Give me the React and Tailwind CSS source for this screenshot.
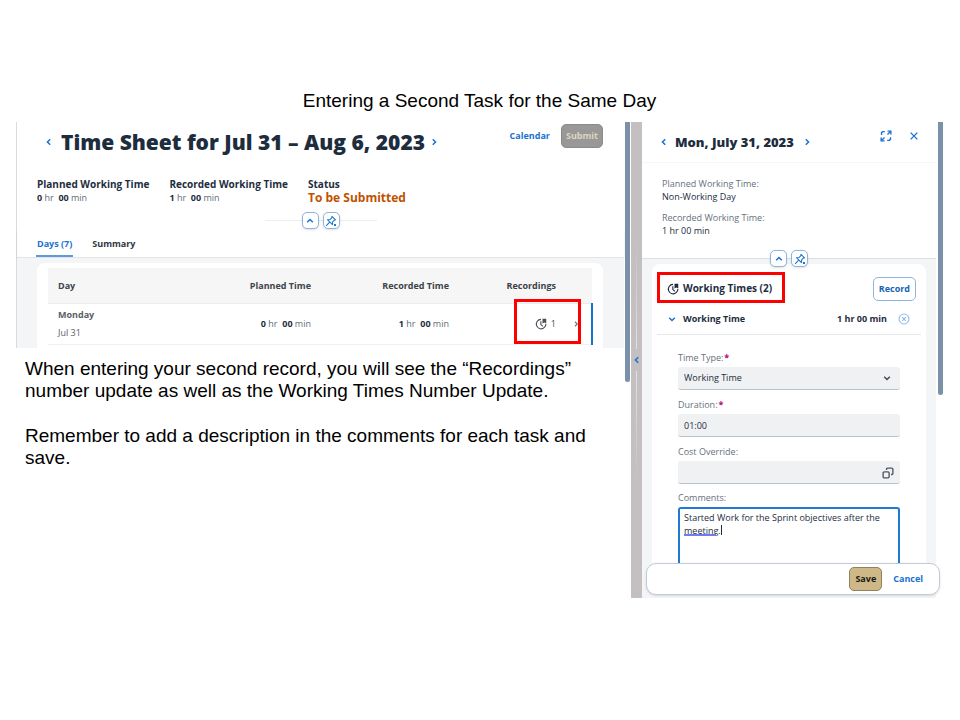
import { useState } from "react";

const days = [
	{ day: "Monday", date: "Jul 31", planned: ["0", "00"], recorded: ["1", "00"], count: 1 },
];

function Chevron({ dir, className }) {
	const paths = {
		left: "M10 3.5 5.5 8l4.5 4.5",
		right: "M6 3.5 10.5 8 6 12.5",
		up: "M3.5 10 8 5.5l4.5 4.5",
		down: "M3.5 6 8 10.5 12.5 6",
	};
	return (
		<svg viewBox="0 0 16 16" className={className} fill="none" stroke="currentColor" strokeWidth="2.4">
			<path d={paths[dir]} />
		</svg>
	);
}

function PinIcon() {
	return (
		<svg viewBox="0 0 16 16" className="size-3" fill="none" stroke="currentColor" strokeWidth="1.4" strokeLinejoin="round">
			<path d="M9.3 1.8 14 6.4l-1.6.5-2.2 2.3-.3 3.6L3.3 6.3l3.6-.3 2.2-2.4zM6.2 9.6 1.5 14.4" />
			<path d="M12 12h2.6v2.6H12z" fill="currentColor" stroke="none" />
		</svg>
	);
}

function ClockIcon() {
	return (
		<svg viewBox="0 0 16 16" className="size-3" fill="none" stroke="currentColor" strokeWidth="1.5">
			<path d="M8 1.8A6.300 6.300 0 1 0 12.500 12.600c1.300-1.200 2-2.700 2-4.600" />
			<path d="M7.800 4.200v4.600l2.800 2.400" />
			<path d="M10 1h5v6.400l-2.500-1.400-2.500 1.400z" fill="currentColor" stroke="none" />
		</svg>
	);
}

function SnapButtons() {
	const button =
		"flex size-[17px] items-center justify-center rounded-[5px] border border-[#8fb5dc] bg-white text-[#1a73d1] shadow-sm";
	return (
		<div className="flex justify-center gap-1">
			<button type="button" aria-label="Collapse header" className={button}>
				<Chevron dir="up" className="size-2.5" />
			</button>
			<button type="button" aria-label="Pin header" className={button}>
				<PinIcon />
			</button>
		</div>
	);
}

function Duration({ value, className = "" }) {
	return (
		<span className={`text-[9px] text-[#5f6b78] ${className}`}>
			<b className="text-[#1d2d3e]">{value[0]}</b> hr &nbsp;
			<b className="text-[#1d2d3e]">{value[1]}</b> min
		</span>
	);
}

function Label({ htmlFor, required, children }) {
	return (
		<label htmlFor={htmlFor} className="block h-[18px] text-[9px] leading-[18px] text-[#66717c]">
			{children}
			{required && <span className="ml-px font-bold text-[#ba066c]">*</span>}
		</label>
	);
}

function TimeSheet() {
	return (
		<section className="border-l border-[#d9dbdd] bg-white">
			<div className="flex items-start justify-between pr-[21px] pl-[27px]">
				<div className="flex items-center pt-1">
					<button type="button" aria-label="Previous week" className="text-[#1a73d1]">
						<Chevron dir="left" className="size-2.5" />
					</button>
					<h2 className="pr-1 pl-[7px] text-[21px] leading-8 font-extrabold whitespace-nowrap text-[#1d2d3e]">
						Time Sheet for Jul 31 – Aug 6, 2023
					</h2>
					<button type="button" aria-label="Next week" className="text-[#1a73d1]">
						<Chevron dir="right" className="size-2.5" />
					</button>
				</div>
				<div className="flex items-center gap-[11px] pt-0.5 text-[9px] font-bold">
					<a href="#calendar" className="text-[#1a73d1]">Calendar</a>
					<button type="button" className="h-6 rounded-[5px] border border-[#8c8b88] bg-[#999896] px-1 text-[#dcd5c3]">
						Submit
					</button>
				</div>
			</div>

			<div className="flex gap-5 pt-[19px] pl-5 text-[10px] leading-[14px]">
				<div>
					<div className="font-bold text-[#1d2d3e]">Planned Working Time</div>
					<Duration value={["0", "00"]} className="block" />
				</div>
				<div>
					<div className="font-bold text-[#1d2d3e]">Recorded Working Time</div>
					<Duration value={["1", "00"]} className="block" />
				</div>
				<div>
					<div className="font-bold text-[#1d2d3e]">Status</div>
					<div className="text-[12px] font-bold text-[#bf5200]">To be Submitted</div>
				</div>
			</div>

			<div className="relative pt-[7px]">
				<div className="mx-auto -mb-[9px] h-[9px] w-28 border-b border-[#eceef0]" />
				<div className="relative">
					<SnapButtons />
				</div>
			</div>

			<nav className="flex gap-[19px] border-b border-[#e2e4e6] pt-1 pl-[19px] text-[9px] leading-[22px] font-bold shadow-[0_1px_2px_#0000001a]">
				<a href="#days" className="border-b-2 border-[#5b9bdd] px-px text-[#1a73d1]">Days (7)</a>
				<a href="#summary" className="text-[#30373e]">Summary</a>
			</nav>

			<div className="bg-[#f3f5f7] pt-[5px] pr-[21px] pl-5">
				<div className="rounded-t-lg bg-white pt-[5px] pr-2.5 pb-[3px] pl-[11px]">
					<table className="w-full table-fixed text-[9px]">
						<colgroup>
							<col />
							<col className="w-[138px]" />
							<col className="w-[138px]" />
							<col className="w-[107px]" />
							<col className="w-[26px]" />
						</colgroup>
						<thead>
							<tr className="h-[35px] border-b border-[#ececec] bg-[#f6f6f6] text-right text-[#3d4349]">
								<th className="px-2.5 text-left">Day</th>
								<th className="px-2.5">Planned Time</th>
								<th className="px-2.5">Recorded Time</th>
								<th className="px-2.5">Recordings</th>
								<th aria-label="Open" />
							</tr>
						</thead>
						<tbody>
							{days.map((d) => (
								<tr key={d.day} className="h-[41px] border-b border-[#f0f0f0] text-right">
									<td className="px-2.5 text-left leading-[18px] text-[#5a6066]">
										<div className="font-bold">{d.day}</div>
										<div>{d.date}</div>
									</td>
									<td className="px-2.5"><Duration value={d.planned} /></td>
									<td className="px-2.5"><Duration value={d.recorded} /></td>
									<td className="relative px-2.5 text-[#4a5056]">
										<div className="flex items-center justify-end gap-1">
											<ClockIcon />
											{d.count}
										</div>
										<div className="absolute -top-[5px] -right-[15px] h-[45px] w-[67px] border-3 border-[#ff0000]" />
									</td>
									<td className="border-r-2 border-[#1a73d1] text-[#6b7885]">
										<Chevron dir="right" className="ml-1.5 size-2" />
									</td>
								</tr>
							))}
						</tbody>
					</table>
				</div>
			</div>
		</section>
	);
}

function DayPanel() {
	const [duration, setDuration] = useState("01:00");
	const [cost, setCost] = useState("");
	const [comment, setComment] = useState("Started Work for the Sprint objectives after the meeting.");
	const field = "block h-[23px] w-full appearance-none rounded-[3px] border-b border-[#b9c2cb] bg-[#eff1f2] px-1.5 text-[9px] text-[#1d2d3e]";

	return (
		<section className="relative min-w-0 flex-1 bg-[#f4f5f6] pb-[33px]">
			<div className="border-b border-[#dcdfe2] bg-white">
				<div className="flex h-[41px] items-start justify-between border-b border-[#f6f6f7] pr-4 pl-[17px]">
					<div className="flex items-center pt-2">
						<button type="button" aria-label="Previous day" className="text-[#1a73d1]">
							<Chevron dir="left" className="size-2.5" />
						</button>
						<h2 className="pr-2 pl-[6px] text-[13px] leading-6 font-extrabold whitespace-nowrap text-[#1d2d3e]">
							Mon, July 31, 2023
						</h2>
						<button type="button" aria-label="Next day" className="text-[#1a73d1]">
							<Chevron dir="right" className="size-2.5" />
						</button>
					</div>
					<div className="flex items-center gap-4 pt-2 text-[#1a73d1]">
						<button type="button" aria-label="Full screen">
							<svg viewBox="0 0 16 16" className="size-3" fill="none" stroke="currentColor" strokeWidth="1.8">
								<path d="M10 1.5h4.5V6M14.5 1.5 10 6M6 14.5H1.5V10M1.5 14.5 6 10M2 6.5V3.500L3.500 2.200H6.500M14 9.500v3L12.500 13.800H9.500" />
							</svg>
						</button>
						<button type="button" aria-label="Close">
							<svg viewBox="0 0 16 16" className="size-3" fill="none" stroke="currentColor" strokeWidth="1.8">
								<path d="m3.5 3.5 9 9m0-9-9 9" />
							</svg>
						</button>
					</div>
				</div>
				<dl className="h-[95px] pt-[14px] pl-5 text-[9px] leading-[13px]">
					<dt className="text-[#66717c]">Planned Working Time:</dt>
					<dd className="text-[#1d2d3e]">Non-Working Day</dd>
					<dt className="pt-2 text-[#66717c]">Recorded Working Time:</dt>
					<dd className="text-[#1d2d3e]">1 hr 00 min</dd>
				</dl>
			</div>

			<div className="relative -mt-[9px] -mb-[11px]">
				<SnapButtons />
			</div>

			<div className="mx-2.5 mt-2 rounded-t-lg bg-white px-[5px]">
				<div className="flex h-[49px] items-center justify-between pr-[5px]">
					<h3 className="relative flex items-center gap-1 pl-2.5 text-[10px] font-bold text-[#1d2d3e]">
						<ClockIcon />
						Working Times (2)
						<span className="absolute -top-[9px] -right-[13px] -bottom-[7px] left-0 border-3 border-[#ff0000]" />
					</h3>
					<button type="button" className="h-6 rounded-[5px] border border-[#8fb5dc] px-[5px] text-[9px] font-bold text-[#1763b5]">
						Record
					</button>
				</div>
				<div className="flex h-[22px] items-start border-b border-[#e6e8ea] pr-[11px] pl-2.5 text-[9px] leading-3 font-bold text-[#1d2d3e]">
					<Chevron dir="down" className="mt-px mr-1.5 size-2.5 text-[#1a73d1]" />
					<span className="flex-1">Working Time</span>
					<span>1 hr 00 min</span>
					<button type="button" aria-label="Delete" className="ml-[11px] text-[#8ab9ea]">
						<svg viewBox="0 0 16 16" className="size-3" fill="none" stroke="currentColor" strokeWidth="1.4">
							<circle cx="8" cy="8" r="6.6" />
							<path d="m5.5 5.5 5 5m0-5-5 5" />
						</svg>
					</button>
				</div>

				<form className="px-[21px] pt-[14px]">
					<Label htmlFor="type" required>Time Type:</Label>
					<div className="relative mb-[6px]">
						<select id="type" className={field}>
							<option>Working Time</option>
						</select>
						<Chevron dir="down" className="pointer-events-none absolute top-1.5 right-2 size-2.5 text-[#3f4b57]" />
					</div>
					<Label htmlFor="duration" required>Duration:</Label>
					<input id="duration" className={`${field} mb-[6px]`} value={duration} onChange={(e) => setDuration(e.target.value)} />
					<Label htmlFor="cost">Cost Override:</Label>
					<div className="relative mb-[5px]">
						<input id="cost" className={field} value={cost} onChange={(e) => setCost(e.target.value)} />
						<svg viewBox="0 0 16 16" className="pointer-events-none absolute top-1.5 right-1.5 size-3" fill="none" stroke="#4b5763" strokeWidth="1.8">
							<rect x="1.5" y="6.5" width="8" height="8" rx="1.5" />
							<path d="M6 4V3a1.5 1.5 0 0 1 1.5-1.5H13A1.5 1.5 0 0 1 14.5 3v5.5A1.5 1.5 0 0 1 13 10h-1" />
						</svg>
					</div>
					<Label htmlFor="comments">Comments:</Label>
					<div className="relative">
						<textarea
							id="comments"
							className="block h-[58px] w-full resize-none rounded-t-[3px] border-2 border-b-0 border-[#1f7ad4] bg-white px-1 py-0.5 text-[9px] leading-[13px] text-[#1d2d3e]"
							value={comment}
							onChange={(e) => setComment(e.target.value)}
						/>
						{/* spelling mark and caret */}
						<span className="pointer-events-none absolute top-[27px] left-1.5 h-0.5 w-8 bg-[#6f7df0]" />
						<span className="pointer-events-none absolute top-[18px] left-[43px] h-2.5 w-px bg-[#1d2d3e]" />
					</div>
				</form>
			</div>

			<div className="absolute -right-1 bottom-[3px] left-1 flex h-8 items-center justify-end gap-[11px] rounded-[10px] border border-[#c3cbd6] bg-white pr-4 text-[9px] font-bold shadow-sm">
				<button type="button" className="h-6 rounded-[5px] border border-[#8f8260] bg-[#cfb887] px-[5px] text-[#1c1a14]">
					Save
				</button>
				<button type="button" className="text-[#1a73d1]">Cancel</button>
			</div>
		</section>
	);
}

export default function App() {
	return (
		<main className="min-h-screen bg-white pt-[89px] pr-[17px] pl-4 font-['Open_Sans',sans-serif]">
			<h1 className="pb-[9px] text-center font-['Liberation_Sans',sans-serif] text-[19px] leading-6 text-black">
				Entering a Second Task for the Same Day
			</h1>
			<div className="grid grid-cols-[615fr_312fr]">
				<div className="flex gap-px pr-px">
					<div className="min-w-0 flex-1">
						<TimeSheet />
						<div className="space-y-[23px] pt-[10px] pr-3 pl-[9px] font-['Liberation_Sans',sans-serif] text-[19px] leading-[22px] text-black">
							<p>
								When entering your second record, you will see the “Recordings” number update as well as the
								Working Times Number Update.
							</p>
							<p>Remember to add a description in the comments for each task and save.</p>
						</div>
					</div>
					<div className="h-[260px] w-[5px] rounded-b-full bg-[#7b91aa]" />
				</div>
				<div className="flex">
					<div className="flex w-[11px] flex-col items-center bg-[#c4bfc0]">
						<div className="w-px flex-1 bg-linear-to-t from-[#e4e1e2] to-[#c4bfc0] to-50%" />
						<button type="button" aria-label="Expand panel" className="py-1.5 text-[#1a73d1]">
							<Chevron dir="left" className="size-2.5" />
						</button>
						<div className="w-px flex-1 bg-linear-to-b from-[#e4e1e2] to-[#c4bfc0] to-50%" />
					</div>
					<DayPanel />
					<div className="ml-0.5 h-[273px] w-[5px] rounded-b-full bg-[#7b91aa]" />
				</div>
			</div>
		</main>
	);
}
